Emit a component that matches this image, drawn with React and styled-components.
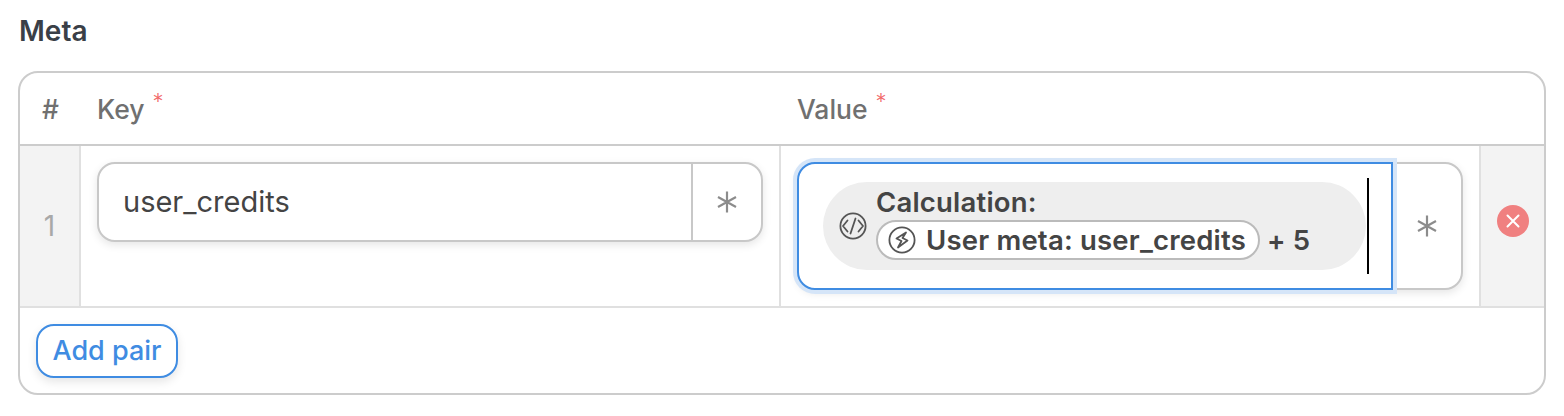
import React from "react";
import styled, { createGlobalStyle } from "styled-components";

const GlobalStyle = createGlobalStyle`
  html, body {
    margin: 0;
    padding: 0;
    background: #fff;
    font-family: Inter, "Liberation Sans", sans-serif;
    -webkit-font-smoothing: antialiased;
  }
  * { box-sizing: border-box; }
`;

const Page = styled.div`
  width: 1564px;
  height: 416px;
  padding: 14px 18px 0;
  overflow: hidden;
`;

const Title = styled.h2`
  margin: 0 0 24px 1px;
  height: 33px;
  font-size: 28px;
  line-height: 35px;
  font-weight: 600;
  color: #3a3f47;
`;

const Table = styled.div`
  height: 324px;
  border: 2px solid #cccccc;
  border-radius: 20px;
  overflow: hidden;
`;

const Row = styled.div`
  display: grid;
  grid-template-columns: 61px 700px 700px 1fr;
`;

const HeaderRow = styled(Row)`
  height: 73px;
  border-bottom: 2px solid #cccccc;
`;

const BodyRow = styled(Row)`
  height: 162px;
  border-bottom: 2px solid #e0e0e0;
`;

const HeaderCell = styled.div`
  display: flex;
  align-items: center;
  justify-content: ${(p) => (p.$center ? "center" : "flex-start")};
  padding-left: ${(p) => (p.$center ? 0 : "16px")};
  font-size: 26.5px;
  font-weight: 500;
  color: #707070;
`;

const Required = styled.span`
  align-self: flex-start;
  margin: 16px 0 0 8px;
  font-size: 22px;
  font-weight: 300;
  line-height: 24px;
  color: #f26a6a;
`;

const IndexCell = styled.div`
  display: flex;
  align-items: center;
  justify-content: center;
  background: #f3f3f3;
  border-right: 2px solid #e0e0e0;
  font-size: 28px;
  color: #a8a8a8;
`;

const FieldCell = styled.div`
  display: flex;
  align-items: flex-start;
  padding: 16px 16px 0;
  border-right: 2px solid #e0e0e0;
`;

const ActionCell = styled.div`
  display: flex;
  justify-content: center;
  padding: 59px 0 0 0;
  background: #f3f3f3;
`;

const Field = styled.div`
  display: flex;
  width: 666px;
  border: 2px solid #c8c8c8;
  border-radius: 18px;
  background: #fff;
  box-shadow: 0 3px 8px rgba(0, 0, 0, 0.1);
`;

const TextInput = styled.div`
  flex: 1;
  height: 76px;
  padding: 0 0 2px 24px;
  display: flex;
  align-items: center;
  font-size: 29px;
  color: #444444;
`;

const VarButton = styled.div`
  display: flex;
  align-items: center;
  justify-content: center;
  width: ${(p) => p.$width}px;
  border-left: ${(p) => (p.$divided ? "2px solid #c8c8c8" : "none")};
  flex-shrink: 0;
`;

const FocusedInput = styled.div`
  position: relative;
  z-index: 1;
  flex: 1;
  height: 128px;
  margin: -2px 0 -2px -2px;
  padding: 18px 0 0 24px;
  border: 2px solid #3f8ce2;
  border-radius: 18px 0 0 18px;
  background: #fff;
  box-shadow: 0 0 0 4px #d5e5f8;
`;

const Line = styled.div`
  display: flex;
  align-items: flex-start;
`;

const FormulaPill = styled.div`
  display: flex;
  align-items: center;
  width: 543px;
  height: 88px;
  padding-left: 16px;
  border-radius: 44px;
  background: #eeeeee;
  color: #444444;
  font-size: 27.5px;
  font-weight: 600;
  letter-spacing: 0.2px;
`;

const FormulaBody = styled.div`
  display: flex;
  flex-direction: column;
  margin-left: 9px;
`;

const FormulaTitle = styled.div`
  height: 38px;
  line-height: 40px;
`;

const FormulaLine = styled.div`
  display: flex;
  align-items: center;
  gap: 7px;
  margin-bottom: 10px;
`;

const Chip = styled.span`
  display: inline-flex;
  align-items: center;
  height: 40px;
  padding: 0 12px 0 10px;
  gap: 10px;
  border: 2px solid #bbbbbb;
  border-radius: 20px;
  background: #fff;
`;

const Caret = styled.div`
  width: 2px;
  height: 96px;
  margin: -4px 0 0 1px;
  background: #000;
`;

const RemoveButton = styled.button`
  display: flex;
  align-items: center;
  justify-content: center;
  width: 32px;
  height: 32px;
  padding: 0;
  border: none;
  border-radius: 50%;
  background: #f08080;
`;

const Footer = styled.div`
  padding: 16px;
`;

const AddButton = styled.button`
  width: 142px;
  height: 54px;
  padding: 0 0 2px;
  border: 2px solid #3f8ce2;
  border-radius: 18px;
  background: #fff;
  color: #3f8ce2;
  font-family: inherit;
  font-size: 27px;
  font-weight: 500;
  box-shadow: 0 4px 10px rgba(0, 0, 0, 0.1);
`;

const Asterisk = () => (
  <svg width="20" height="22" viewBox="0 0 20 22" fill="none" stroke="#8c8c8c" strokeWidth="2.2">
    <path d="M10 0.5v21M1 6l18 10M19 6L1 16" />
  </svg>
);

const CodeIcon = () => (
  <svg width="28" height="28" viewBox="0 0 28 28" fill="none" stroke="#555" strokeWidth="1.8" strokeLinecap="round" strokeLinejoin="round">
    <circle cx="14" cy="14" r="12.6" />
    <path d="M8.5 8.5L4 14l4.5 5.5M19.5 8.5L24 14l-4.5 5.5M16.5 6.5l-5 15" />
  </svg>
);

const BoltIcon = () => (
  <svg width="28" height="28" viewBox="0 0 28 28" fill="none" stroke="#555" strokeWidth="1.8" strokeLinecap="round" strokeLinejoin="round">
    <circle cx="14" cy="14" r="12.6" />
    <path d="M18 6.5L8.5 12.5l5 2.5-3.5 6.5 9.5-7-5-2.5z" />
  </svg>
);

const CloseIcon = () => (
  <svg width="14" height="14" viewBox="0 0 14 14" fill="none" stroke="#fff" strokeWidth="2" strokeLinecap="round">
    <path d="M1.5 1.5l11 11M12.5 1.5l-11 11" />
  </svg>
);

export default function App() {
  return (
    <Page>
      <GlobalStyle />
      <Title>Meta</Title>
      <Table>
        <HeaderRow>
          <HeaderCell $center>#</HeaderCell>
          <HeaderCell>
            Key<Required>*</Required>
          </HeaderCell>
          <HeaderCell>
            Value<Required>*</Required>
          </HeaderCell>
          <div />
        </HeaderRow>
        <BodyRow>
          <IndexCell>1</IndexCell>
          <FieldCell>
            <Field>
              <TextInput>user_credits</TextInput>
              <VarButton $divided $width={70}>
                <Asterisk />
              </VarButton>
            </Field>
          </FieldCell>
          <FieldCell>
            <Field>
              <FocusedInput>
                <Line>
                  <FormulaPill>
                    <CodeIcon />
                    <FormulaBody>
                      <FormulaTitle>Calculation:</FormulaTitle>
                      <FormulaLine>
                        <Chip>
                          <BoltIcon />
                          User meta: user_credits
                        </Chip>
                        <span>+ 5</span>
                      </FormulaLine>
                    </FormulaBody>
                  </FormulaPill>
                  <Caret />
                </Line>
              </FocusedInput>
              <VarButton $width={68}>
                <Asterisk />
              </VarButton>
            </Field>
          </FieldCell>
          <ActionCell>
            <RemoveButton aria-label="Remove">
              <CloseIcon />
            </RemoveButton>
          </ActionCell>
        </BodyRow>
        <Footer>
          <AddButton>Add pair</AddButton>
        </Footer>
      </Table>
    </Page>
  );
}
